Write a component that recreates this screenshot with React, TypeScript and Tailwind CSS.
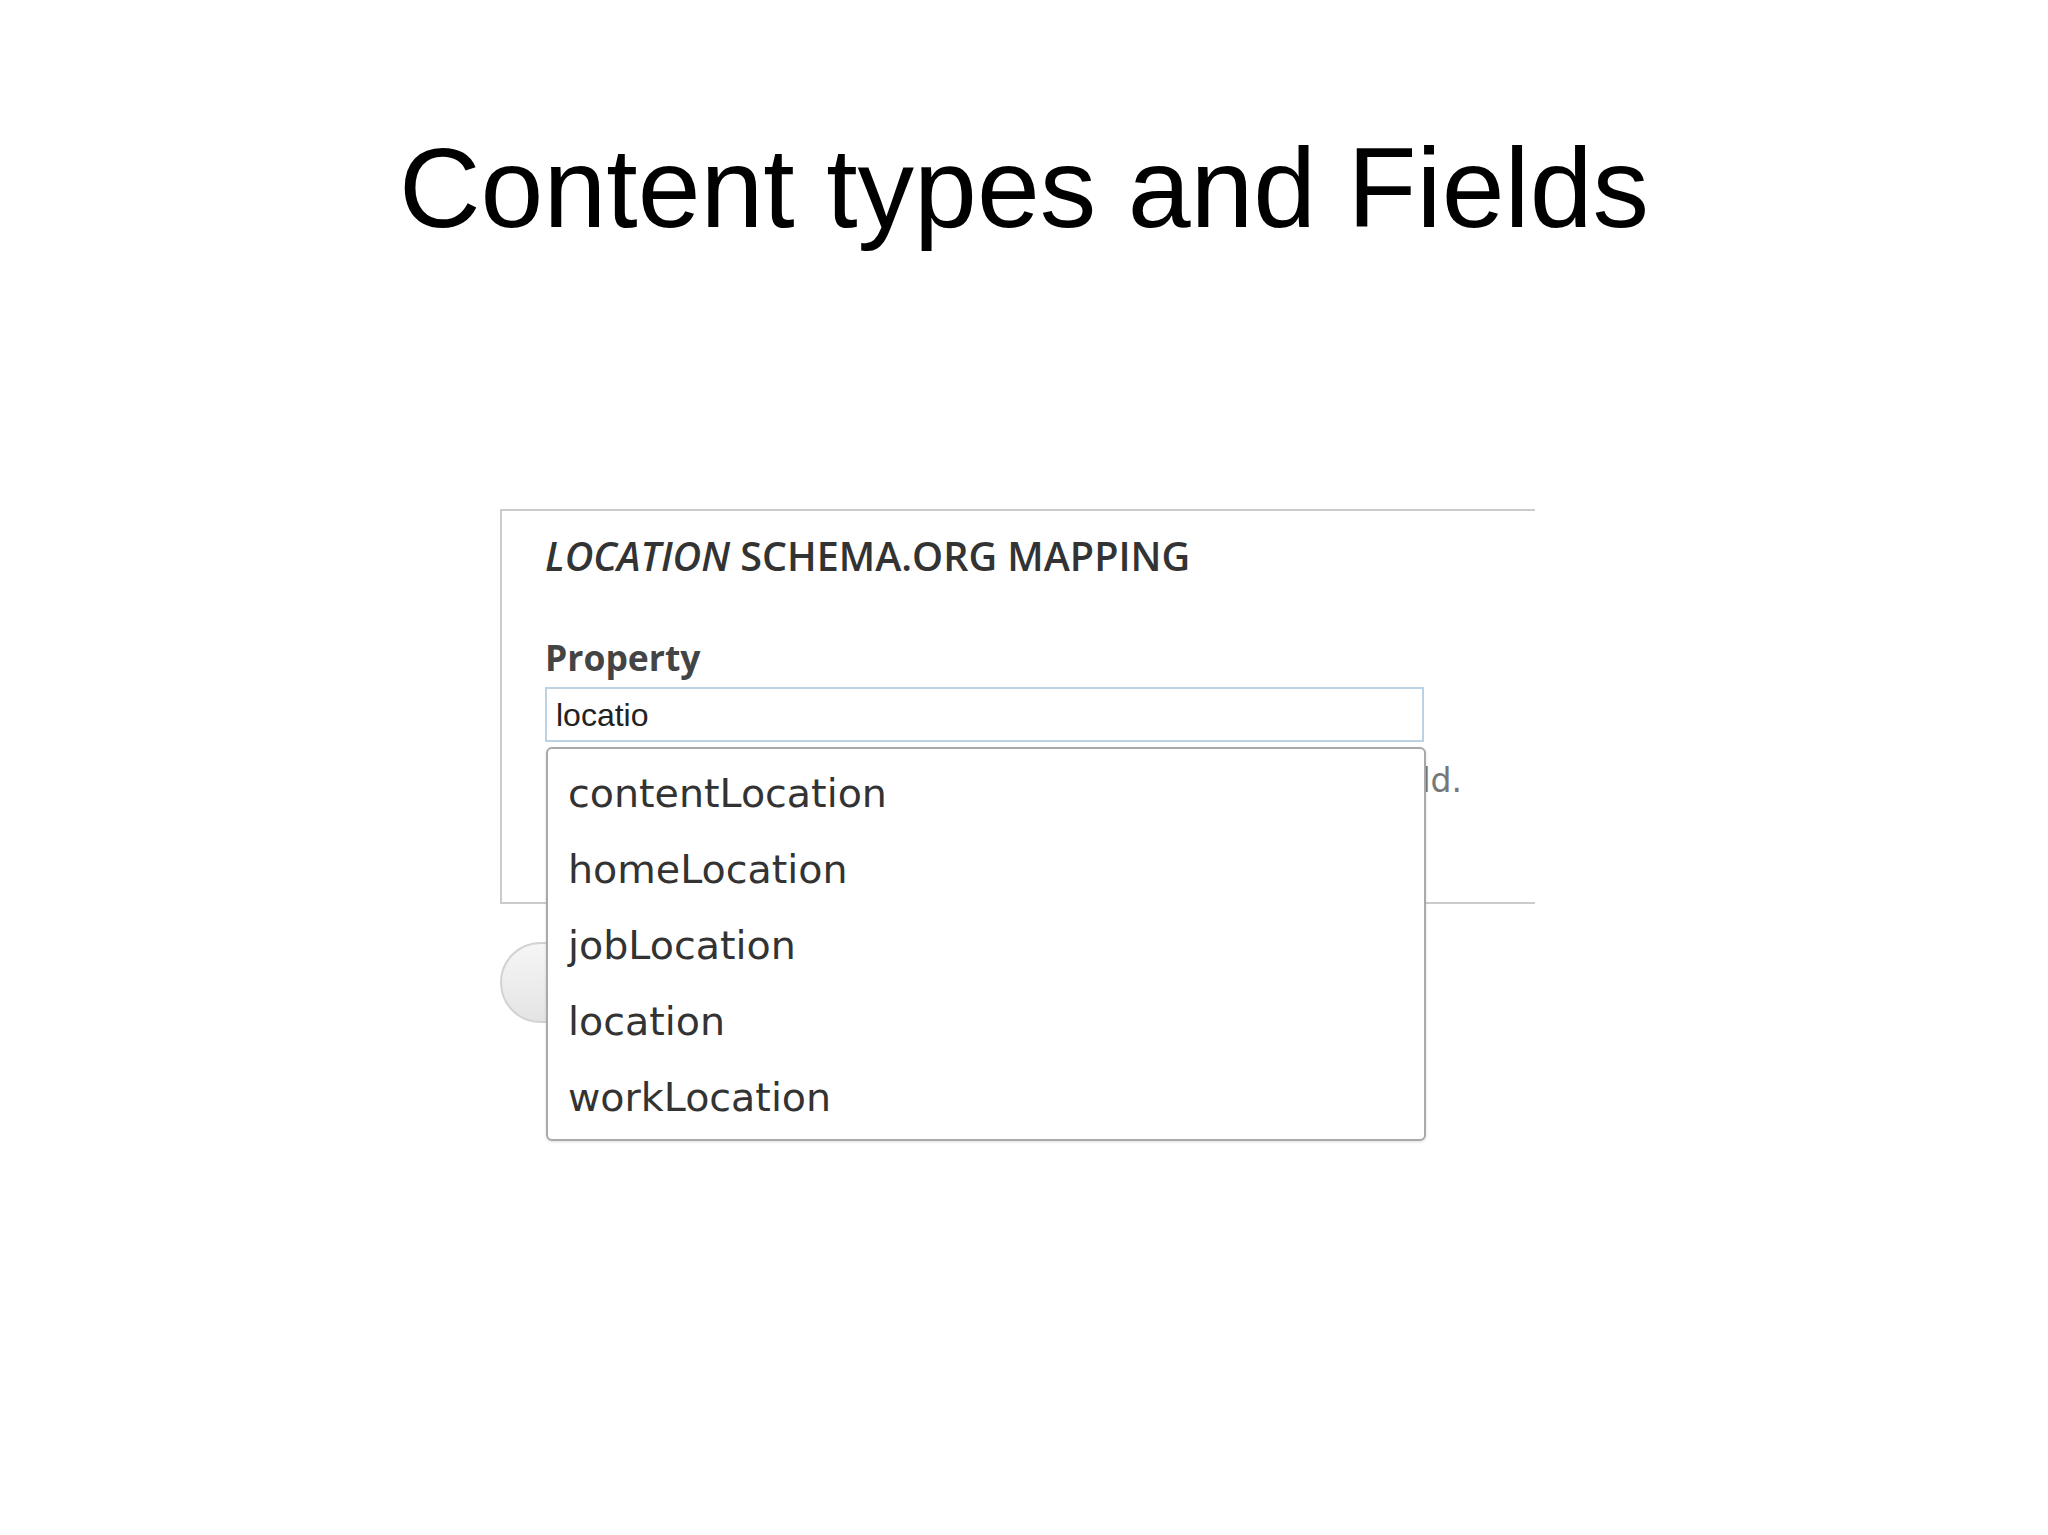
const suggestions = ["contentLocation", "homeLocation", "jobLocation", "location", "workLocation"];

export default function App() {
  return (
    <div className="min-h-[1535px] w-full bg-white font-['Liberation_Sans',Arial,sans-serif]">
      <h1 className="m-0 pt-[132px] text-center text-[113px] font-normal leading-none text-black">Content types and Fields</h1>

      <div className="ml-[500px] mt-[264px] w-[1035px]">
        {/* mapping fieldset, cropped on the right like the screenshot */}
        <div className="border-y-2 border-l-2 border-[#cbcbcb] pb-[105px] pl-[43px] pt-[26px]">
          <h2 className="m-0 font-['Open_Sans',sans-serif] text-[39.5px] font-semibold leading-none text-[#333]">
            <em className="font-semibold">LOCATION</em> SCHEMA.ORG MAPPING
          </h2>

          <div className="mt-[63px] font-['Open_Sans',sans-serif] text-[35.5px] font-bold leading-none text-[#444]">Property</div>

          <div className="relative mt-[12px] w-[879px]">
            <div className="h-[55px] border-2 border-[#bcd2e3] bg-white pl-[9px] pt-[10px] text-[32px] leading-none text-[#222]">locatio</div>

            <div className="absolute left-px top-[60px] z-10 h-[394px] w-[880px] rounded-md border-2 border-[#a9a9a9] bg-white pl-[20px] pt-[6px] font-['DejaVu_Sans',Verdana,sans-serif] text-[39.6px] leading-[76px] text-[#333] shadow-[0_1px_3px_rgba(0,0,0,0.12)]">
              {suggestions.map((item) => (
                <div key={item}>{item}</div>
              ))}
            </div>
          </div>

          <div className="mt-[22px] flex w-[917px] justify-end whitespace-nowrap font-['DejaVu_Sans',Verdana,sans-serif] text-[33px] leading-none text-[#777]">
            <span>Choose a property for this field.</span>
          </div>
        </div>

        <button type="button" className="mt-[38px] h-[81px] w-[300px] rounded-full border-2 border-[#d2d2d2] bg-gradient-to-b from-[#f6f6f6] to-[#e4e4e4]" aria-label="Save" />
      </div>
    </div>
  );
}
